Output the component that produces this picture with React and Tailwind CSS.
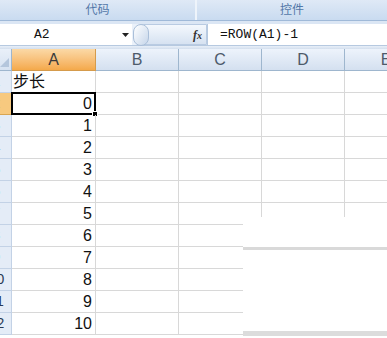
import React from 'react';

const cols = ['A', 'B', 'C', 'D', 'E'];
// Rows of the sheet: row 1 holds the label, rows 2..12 hold 0..10
const rows = [{ n: 1, v: '步长' }].concat(
  Array.from({ length: 11 }, (_, i) => ({ n: i + 2, v: String(i) }))
);

export default function App() {
  return (
    <div className="relative w-[387px] h-[338px] overflow-hidden bg-white font-['Liberation_Sans','Noto_Sans_CJK_SC',sans-serif]">
      {/* Ribbon group labels */}
      <div className="flex h-[21px] bg-gradient-to-b from-[#dfe9f6] to-[#c9dbf0] border-b border-[#9fb9d8] text-[12px] text-[#5277a8]">
        <div className="w-[197px] flex items-center justify-center border-r-2 border-[#eef4fb]">代码</div>
        <div className="flex-1 flex items-center justify-center">控件</div>
      </div>

      {/* Formula bar */}
      <div className="h-[3px] bg-[#dbe6f4]" />
      <div className="flex h-[22px] items-stretch bg-[#eaf1fa] border-b border-[#b6c9e0]">
        <div className="w-[118px] bg-white flex items-center pl-[34px] font-['Liberation_Mono',monospace] text-[13px] text-[#111]">
          A2
        </div>
        <div className="w-[14px] bg-white flex items-center justify-center">
          <svg width="7" height="4" viewBox="0 0 7 4"><path d="M0 0h7L3.5 4z" fill="#222" /></svg>
        </div>
        <div className="relative flex-1 flex items-center bg-gradient-to-b from-[#f4f8fd] to-[#d6e2f1] rounded-l-full border border-[#b9cbe2] ml-[1px]">
          <div className="absolute left-[-1px] top-[-1px] w-[16px] h-[22px] rounded-full bg-gradient-to-br from-white to-[#c6d6ea] border border-[#aabfd9]" />
          <span className="ml-auto mr-[4px] font-['Liberation_Serif',serif] italic font-bold text-[12px] text-[#333]">
            f<span className="text-[10px]">x</span>
          </span>
        </div>
        <div className="w-[180px] bg-white border-l border-[#b6c9e0] flex items-center pl-[12px] font-['Liberation_Mono',monospace] text-[13px] text-[#111]">
          =ROW(A1)-1
        </div>
      </div>
      <div className="h-[3px] bg-gradient-to-b from-[#e8eff8] to-[#d3dfee]" />

      {/* Sheet grid: row header column is partly scrolled out of view */}
      <div className="ml-[-18px] grid grid-cols-[30px_84px_83px_83px_83px_83px] auto-rows-[22px]">
        <div className="relative bg-gradient-to-b from-[#e9f0f9] to-[#d6e2f1] border-r border-b border-[#9eb6ce]">
          <svg className="absolute right-[2px] bottom-[3px]" width="9" height="9" viewBox="0 0 9 9">
            <path d="M9 0V9H0z" fill="#b4c6dc" />
          </svg>
        </div>
        {cols.map((c) => (
          <div
            key={c}
            className={`flex items-center justify-center text-[16px] border-r border-b ${
              c === 'A'
                ? 'bg-gradient-to-b from-[#fbd9a6] to-[#f4a94a] border-[#d59b4c] text-[#3b3b3b]'
                : 'bg-gradient-to-b from-[#edf3fb] to-[#d4e0f0] border-[#9eb6ce] text-[#4d5a6a]'
            }`}
          >
            {c}
          </div>
        ))}

        {rows.map((r) => (
          <React.Fragment key={r.n}>
            <div
              className={`flex items-center justify-center text-[14px] text-[#2a3a55] border-r border-b ${
                r.n === 2
                  ? 'bg-[#f7c97f] border-[#d8a552]'
                  : 'bg-[#e4ecf7] border-[#c3d2e6]'
              }`}
            >
              {r.n}
            </div>
            <div
              className={`relative flex items-center border-r border-b border-[#d8d8d8] text-[16px] text-[#111] ${
                r.n === 1 ? 'justify-start pl-[1px]' : 'justify-end pr-[3px]'
              }`}
            >
              {r.v}
              {r.n === 2 && (
                <div className="absolute inset-[-1px] border-2 border-black">
                  <div className="absolute right-[-4px] bottom-[-4px] w-[6px] h-[6px] bg-black border border-white" />
                </div>
              )}
            </div>
            {cols.slice(1).map((c) => (
              <div key={c} className="border-r border-b border-[#d8d8d8]" />
            ))}
          </React.Fragment>
        ))}
      </div>

      {/* White patch lying over the lower right of the sheet */}
      <div className="absolute left-[243px] top-[217px] right-0 bottom-0 bg-white">
        <div className="mt-[30px] h-[3px] bg-[#d9d9d9]" />
        <div className="mt-[81px] h-[5px] bg-[#dcdcdc]" />
      </div>
    </div>
  );
}
